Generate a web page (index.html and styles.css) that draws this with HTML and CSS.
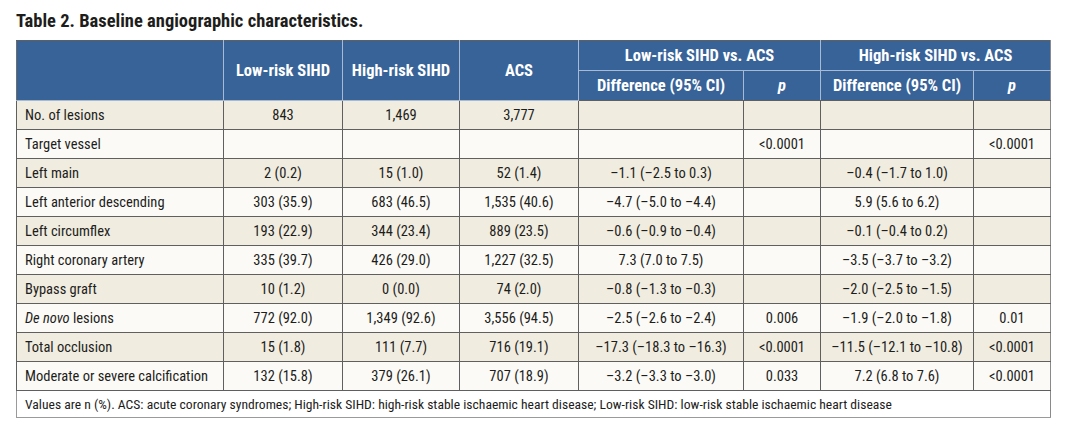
FILE: index.html
```html
<!DOCTYPE html>
<html lang="en">
<head>
<meta charset="utf-8">
<title>Table 2. Baseline angiographic characteristics.</title>
<link rel="stylesheet" href="styles.css">
</head>
<body>
<div class="page">
  <h1 class="title">Table 2. Baseline angiographic characteristics.</h1>
  <table class="data">
    <colgroup>
      <col class="c-label"><col class="c-grp"><col class="c-grp2"><col class="c-grp">
      <col class="c-diff1"><col class="c-p"><col class="c-diff2"><col class="c-p">
    </colgroup>
    <thead>
      <tr class="h1">
        <th rowspan="2"></th>
        <th rowspan="2">Low-risk SIHD</th>
        <th rowspan="2">High-risk SIHD</th>
        <th rowspan="2">ACS</th>
        <th colspan="2">Low-risk SIHD vs. ACS</th>
        <th colspan="2">High-risk SIHD vs. ACS</th>
      </tr>
      <tr class="h2">
        <th>Difference (95% CI)</th>
        <th><i>p</i></th>
        <th>Difference (95% CI)</th>
        <th><i>p</i></th>
      </tr>
    </thead>
    <tbody>
      <tr class="odd"><td>No. of lesions</td><td>843</td><td>1,469</td><td>3,777</td><td></td><td></td><td></td><td></td></tr>
      <tr class="even"><td>Target vessel</td><td></td><td></td><td></td><td></td><td>&lt;0.0001</td><td></td><td>&lt;0.0001</td></tr>
      <tr class="odd"><td>Left main</td><td>2 (0.2)</td><td>15 (1.0)</td><td>52 (1.4)</td><td>–1.1 (–2.5 to 0.3)</td><td></td><td>–0.4 (–1.7 to 1.0)</td><td></td></tr>
      <tr class="even"><td>Left anterior descending</td><td>303 (35.9)</td><td>683 (46.5)</td><td>1,535 (40.6)</td><td>–4.7 (–5.0 to –4.4)</td><td></td><td>5.9 (5.6 to 6.2)</td><td></td></tr>
      <tr class="odd"><td>Left circumflex</td><td>193 (22.9)</td><td>344 (23.4)</td><td>889 (23.5)</td><td>–0.6 (–0.9 to –0.4)</td><td></td><td>–0.1 (–0.4 to 0.2)</td><td></td></tr>
      <tr class="even"><td>Right coronary artery</td><td>335 (39.7)</td><td>426 (29.0)</td><td>1,227 (32.5)</td><td>7.3 (7.0 to 7.5)</td><td></td><td>–3.5 (–3.7 to –3.2)</td><td></td></tr>
      <tr class="odd"><td>Bypass graft</td><td>10 (1.2)</td><td>0 (0.0)</td><td>74 (2.0)</td><td>–0.8 (–1.3 to –0.3)</td><td></td><td>–2.0 (–2.5 to –1.5)</td><td></td></tr>
      <tr class="even"><td><i>De novo</i> lesions</td><td>772 (92.0)</td><td>1,349 (92.6)</td><td>3,556 (94.5)</td><td>–2.5 (–2.6 to –2.4)</td><td>0.006</td><td>–1.9 (–2.0 to –1.8)</td><td>0.01</td></tr>
      <tr class="odd"><td>Total occlusion</td><td>15 (1.8)</td><td>111 (7.7)</td><td>716 (19.1)</td><td>–17.3 (–18.3 to –16.3)</td><td>&lt;0.0001</td><td>–11.5 (–12.1 to –10.8)</td><td>&lt;0.0001</td></tr>
      <tr class="even"><td>Moderate or severe calcification</td><td>132 (15.8)</td><td>379 (26.1)</td><td>707 (18.9)</td><td>–3.2 (–3.3 to –3.0)</td><td>0.033</td><td>7.2 (6.8 to 7.6)</td><td>&lt;0.0001</td></tr>
    </tbody>
    <tfoot>
      <tr class="foot"><td colspan="8">Values are n (%). ACS: acute coronary syndromes; High-risk SIHD: high-risk stable ischaemic heart disease; Low-risk SIHD: low-risk stable ischaemic heart disease</td></tr>
    </tfoot>
  </table>
</div>
</body>
</html>
```

FILE: styles.css
```css
html, body {
  margin: 0;
  padding: 0;
  background: #ffffff;
}

body {
  font-family: "Roboto Condensed", "Roboto", "Liberation Sans", sans-serif;
  font-stretch: condensed;
  color: #1d1d1b;
}

.page {
  padding: 11px 0 0 16px;
  width: 1034px;
}

.title {
  margin: 0 0 9px 0;
  font-size: 18.5px;
  line-height: 20px;
  font-weight: 700;
  color: #1d1d1b;
}

.data {
  width: 1034px;
  table-layout: fixed;
  border-collapse: collapse;
  border: 1px solid #6d6d6d;
}

.c-label { width: 207px; }
.c-grp { width: 119px; }
.c-grp2 { width: 117px; }
.c-diff1 { width: 165px; }
.c-diff2 { width: 153px; }
.c-p { width: 77px; }

.data th {
  background: #386399;
  color: #ffffff;
  font-weight: 700;
  font-size: 16.5px;
  text-align: center;
  border: 1px solid #a7bad2;
  padding: 0 4px;
  white-space: nowrap;
}

.data thead tr:first-child th {
  border-top: 1px solid #5f5f5f;
}

.data thead tr:last-child th {
  border-bottom: 1px solid #5f5f5f;
}

.data thead th:first-child {
  border-left: 1px solid #6d6d6d;
}

.data thead th:last-child,
.data .h2 th:last-child {
  border-right: 1px solid #8a8a8a;
}

.h1 th { height: 29px; }
.h2 th { height: 29px; }

.data td {
  font-size: 14.5px;
  text-align: center;
  border: 1px solid #5f5f5f;
  padding: 0 4px;
  height: 28px;
  white-space: nowrap;
}

.data td:first-child {
  text-align: left;
  padding-left: 8px;
}

.data td:last-child {
  border-right: 1px solid #8a8a8a;
}

.odd td { background: #f0ece0; }
.even td { background: #fbfaf6; }

.foot td {
  background: #ffffff;
  font-size: 13.6px;
  height: 26px;
  text-align: left;
  padding-left: 8px;
  border: 1px solid #9a9a9a;
  border-top: 1px solid #5f5f5f;
  white-space: normal;
}
```
